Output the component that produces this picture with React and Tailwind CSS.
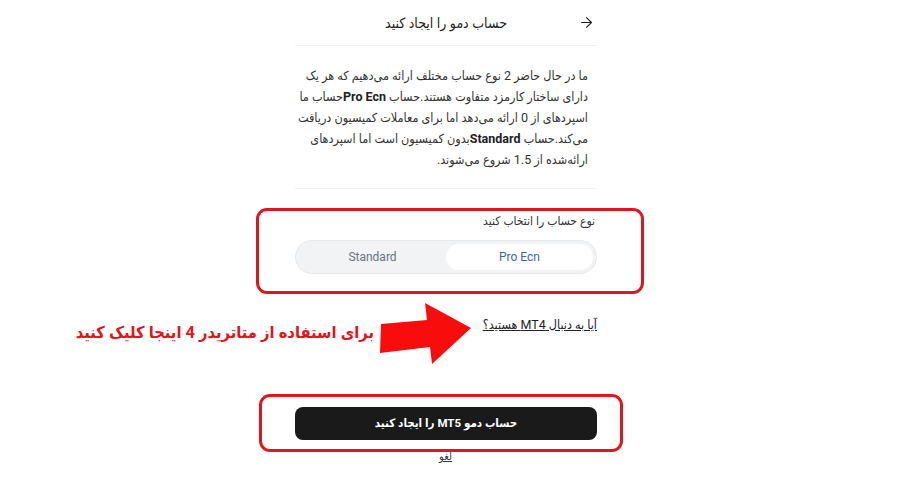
import { ArrowRight } from "lucide-react";

export default function App() {
  return (
    <div
      dir="rtl"
      className="relative w-[924px] h-[484px] bg-white overflow-hidden"
      style={{ fontFamily: 'Roboto, "DejaVu Sans Condensed", sans-serif' }}
    >
      {/* main column */}
      <div className="absolute left-[295px] top-0 w-[302px] flex flex-col">
        {/* header */}
        <div className="relative h-[46px] flex items-center justify-center border-b border-[#f0f0f0]">
          <ArrowRight className="absolute right-[2px] top-[14px] w-[17px] h-[17px] text-[#222]" strokeWidth={1.6} />
          <h1 className="text-[14px] font-medium text-[#222] pt-[1px]">حساب دمو را ایجاد کنید</h1>
        </div>

        {/* description */}
        <p className="pt-[19px] pb-[18px] pr-[9px] pl-[2px] text-[12.5px] leading-[21px] text-[#333] border-b border-[#f0f0f0]">
          ما در حال حاضر 2 نوع حساب مختلف ارائه می‌دهیم که هر یک دارای ساختار کارمزد متفاوت هستند.حساب <b className="font-bold text-[#222] whitespace-nowrap">Pro Ecn</b>حساب ما اسپردهای از 0 ارائه می‌دهد اما برای معاملات کمیسیون دریافت می‌کند.حساب <b className="font-bold text-[#222]">Standard</b>بدون کمیسیون است اما اسپردهای ارائه‌شده از 1.5 شروع می‌شوند.
        </p>

        {/* account type */}
        <div className="pt-[23px] flex flex-col">
          <label className="pr-[2px] text-[12px] leading-[18px] text-[#333]">نوع حساب را انتخاب کنید</label>
          <div className="mt-[10px] h-[34px] rounded-full bg-[#f1f3f5] border border-[#e6e8eb] p-[3px] flex">
            <div className="flex-1 rounded-full bg-white flex items-center justify-center text-[12px] text-[#3b67a6]">Pro Ecn</div>
            <div className="flex-1 flex items-center justify-center text-[12px] text-[#6b7280]">Standard</div>
          </div>
        </div>

        {/* mt4 link */}
        <div className="mt-[42px] text-[12.5px] leading-[18px] text-[#222] underline">آیا به دنبال MT4 هستید؟</div>

        {/* submit */}
        <button className="mt-[73px] h-[33px] rounded-lg bg-[#1a1a1a] text-white text-[11.5px] font-bold flex items-center justify-center whitespace-nowrap">
          حساب دمو MT5 را ایجاد کنید
        </button>
        <div className="mt-[9px] text-center text-[11px] leading-[16px] text-[#333] underline pr-[1px]">لغو</div>
      </div>

      {/* annotations */}
      <div className="absolute left-[256px] top-[208px] w-[388px] h-[86px] rounded-[11px] border-[3px] border-[#e0161c]" />
      <div className="absolute left-[259px] top-[394px] w-[364px] h-[58px] rounded-[11px] border-[3px] border-[#e0161c]" />

      <svg className="absolute left-[376px] top-[300px]" width="98" height="66" viewBox="376 300 98 66">
        <polygon points="381,324 427,320 425,303 471,328 432,364 430,347 380,353" fill="#f80c0c" />
      </svg>
      <div className="absolute left-[40px] top-[321px] w-[334px] text-[16.4px] leading-[24px] font-bold text-[#e0161c] text-right whitespace-nowrap">
        برای استفاده از متاتریدر 4 اینجا کلیک کنید
      </div>
    </div>
  );
}
